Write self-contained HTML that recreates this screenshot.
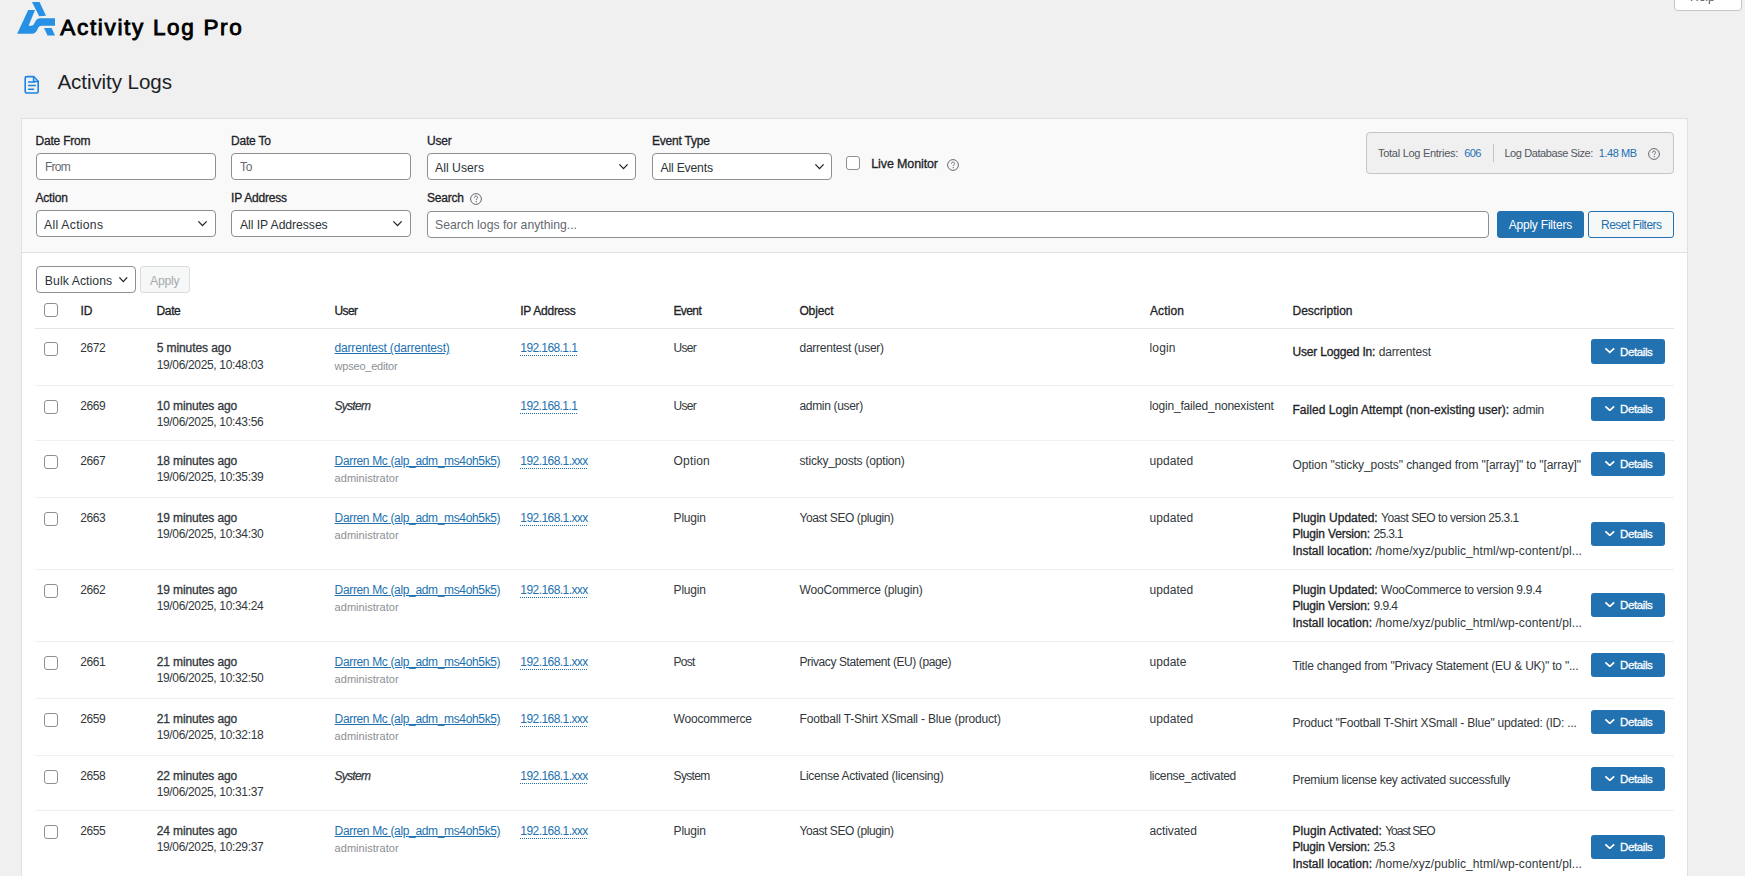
<!DOCTYPE html>
<html><head><meta charset="utf-8"><title>Activity Logs</title>
<style>
html,body{margin:0;padding:0;}
body{width:1745px;height:876px;overflow:hidden;position:relative;background:#f0f0f1;font-family:"Liberation Sans", sans-serif;}
.t{position:absolute;white-space:nowrap;}
b{font-weight:normal;color:#1d2327;-webkit-text-stroke:0.3px #1d2327;}
</style></head><body>
<svg style="position:absolute;left:16px;top:1px" width="40" height="36" viewBox="16 1 40 36">
<path d="M32 2 L39.5 2 L46 15.8 L39.2 16.2 Z" fill="#2590e6"/>
<path d="M28.2 10 L35 10 L28.6 25.8 L31 25.8 C33 25.8 33.8 24.5 34.8 22.5 C36 19.6 37.5 18.2 40.5 18.2 L55 18.2 L55 25.8 L42 25.8 C39.5 25.8 38.5 27 37.6 29 C36.3 32 35 33.7 31.6 33.7 L17.2 33.7 Z" fill="#2590e6"/>
<path d="M44 27.9 L51.6 27.9 L55 35.4 L47.5 35.4 Z" fill="#2590e6"/>
</svg>
<div class="t" style="left:60.3px;top:16.55px;font-size:22.5px;line-height:22.5px;font-weight:normal;color:#000;letter-spacing:1.678px;-webkit-text-stroke:0.9px #000;">Activity Log Pro</div>
<div style="position:absolute;left:1674px;top:-5px;width:68px;height:16px;box-sizing:border-box;background:#fff;border:1px solid #c3c4c7;border-radius:0 0 4px 4px;"></div>
<div class="t" style="left:1690px;top:-8.66px;font-size:12px;line-height:12px;font-weight:normal;color:#50575e;letter-spacing:0.000px;">Help</div>
<svg style="position:absolute;left:0px;top:0px" width="60" height="100" viewBox="0 0 60 100"><path d="M26.6 76.6 H33.6 L38.2 81.2 V91.6 Q38.2 93 36.8 93 H26.6 Q25.2 93 25.2 91.6 V78 Q25.2 76.6 26.6 76.6 Z" fill="none" stroke="#1a84e4" stroke-width="1.6" stroke-linejoin="round"/><path d="M33.6 76.6 V81.4 H38.2" fill="none" stroke="#1a84e4" stroke-width="1.5"/><path d="M34.3 78 L36.9 80.6 L34.3 80.6 Z" fill="#8cc2f2"/><path d="M28.6 82 H34.6 M28.6 85.6 H35.3 M28.6 89.2 H33.6" stroke="#1a84e4" stroke-width="1.5" stroke-linecap="round"/></svg>
<div class="t" style="left:57.4px;top:72.26px;font-size:20.6px;line-height:20.6px;font-weight:normal;color:#1d2327;letter-spacing:-0.084px;">Activity Logs</div>
<div style="position:absolute;left:21px;top:118px;width:1667px;height:782px;box-sizing:border-box;background:#fff;border:1px solid #e0e0e0;"></div>
<div style="position:absolute;left:21px;top:118px;width:1667px;height:135px;box-sizing:border-box;background:#f9f9f9;border:1px solid #e0e0e0;"></div>
<div class="t" style="left:35.5px;top:134.84px;font-size:12px;line-height:12px;font-weight:normal;color:#1d2327;letter-spacing:-0.200px;-webkit-text-stroke:0.3px #1d2327;">Date From</div>
<div class="t" style="left:231px;top:134.84px;font-size:12px;line-height:12px;font-weight:normal;color:#1d2327;letter-spacing:-0.200px;-webkit-text-stroke:0.3px #1d2327;">Date To</div>
<div class="t" style="left:427px;top:134.84px;font-size:12px;line-height:12px;font-weight:normal;color:#1d2327;letter-spacing:-0.200px;-webkit-text-stroke:0.3px #1d2327;">User</div>
<div class="t" style="left:652px;top:134.84px;font-size:12px;line-height:12px;font-weight:normal;color:#1d2327;letter-spacing:-0.200px;-webkit-text-stroke:0.3px #1d2327;">Event Type</div>
<div class="t" style="left:35.5px;top:192.14px;font-size:12px;line-height:12px;font-weight:normal;color:#1d2327;letter-spacing:-0.200px;-webkit-text-stroke:0.3px #1d2327;">Action</div>
<div class="t" style="left:231px;top:192.14px;font-size:12px;line-height:12px;font-weight:normal;color:#1d2327;letter-spacing:-0.200px;-webkit-text-stroke:0.3px #1d2327;">IP Address</div>
<div class="t" style="left:427px;top:192.14px;font-size:12px;line-height:12px;font-weight:normal;color:#1d2327;letter-spacing:-0.200px;-webkit-text-stroke:0.3px #1d2327;">Search</div>
<svg style="position:absolute;left:470px;top:192.5px" width="12" height="12" viewBox="0 0 12 12"><circle cx="6" cy="6" r="5.4" fill="none" stroke="#646970" stroke-width="1"/><path d="M4.4 4.7 C4.4 3.6 5.1 3.1 6 3.1 C6.9 3.1 7.6 3.7 7.6 4.5 C7.6 5.5 6.3 5.6 6.3 6.9" fill="none" stroke="#646970" stroke-width="1"/><circle cx="6.3" cy="8.7" r="0.65" fill="#646970"/></svg>
<div style="position:absolute;left:36px;top:153px;width:180px;height:27px;box-sizing:border-box;background:#fff;border:1px solid #8c8f94;border-radius:4px;"></div>
<div class="t" style="left:45px;top:161.04px;font-size:12px;line-height:12px;font-weight:normal;color:#646970;letter-spacing:-0.767px;">From</div>
<div style="position:absolute;left:231px;top:153px;width:180px;height:27px;box-sizing:border-box;background:#fff;border:1px solid #8c8f94;border-radius:4px;"></div>
<div class="t" style="left:240px;top:161.04px;font-size:12px;line-height:12px;font-weight:normal;color:#646970;letter-spacing:-0.300px;">To</div>
<div style="position:absolute;left:427px;top:153px;width:209px;height:27px;box-sizing:border-box;background:#fff;border:1px solid #8c8f94;border-radius:4px;"></div>
<div class="t" style="left:435px;top:161.67px;font-size:12.2px;line-height:12.2px;font-weight:normal;color:#2c3338;letter-spacing:0.029px;">All Users</div>
<svg style="position:absolute;left:617.5px;top:163.2px" width="11" height="7" viewBox="-1 -1 11 7"><path d="M0.4 0.4 L4.5 4.6 L8.6 0.4" fill="none" stroke="#1d2327" stroke-width="1.3" stroke-linecap="butt"/></svg>
<div style="position:absolute;left:652px;top:153px;width:180px;height:27px;box-sizing:border-box;background:#fff;border:1px solid #8c8f94;border-radius:4px;"></div>
<div class="t" style="left:660.5px;top:161.67px;font-size:12.2px;line-height:12.2px;font-weight:normal;color:#2c3338;letter-spacing:-0.189px;">All Events</div>
<svg style="position:absolute;left:813.7px;top:163.2px" width="11" height="7" viewBox="-1 -1 11 7"><path d="M0.4 0.4 L4.5 4.6 L8.6 0.4" fill="none" stroke="#1d2327" stroke-width="1.3" stroke-linecap="butt"/></svg>
<div style="position:absolute;left:846px;top:156px;width:14px;height:14px;box-sizing:border-box;background:#fff;border:1px solid #8c8f94;border-radius:3px;"></div>
<div class="t" style="left:871.3px;top:157.92px;font-size:12.5px;line-height:12.5px;font-weight:normal;color:#1d2327;letter-spacing:-0.127px;-webkit-text-stroke:0.3px #1d2327;">Live Monitor</div>
<svg style="position:absolute;left:947px;top:159px" width="12" height="12" viewBox="0 0 12 12"><circle cx="6" cy="6" r="5.4" fill="none" stroke="#646970" stroke-width="1"/><path d="M4.4 4.7 C4.4 3.6 5.1 3.1 6 3.1 C6.9 3.1 7.6 3.7 7.6 4.5 C7.6 5.5 6.3 5.6 6.3 6.9" fill="none" stroke="#646970" stroke-width="1"/><circle cx="6.3" cy="8.7" r="0.65" fill="#646970"/></svg>
<div style="position:absolute;left:36px;top:210px;width:180px;height:27px;box-sizing:border-box;background:#fff;border:1px solid #8c8f94;border-radius:4px;"></div>
<div class="t" style="left:44px;top:218.67px;font-size:12.2px;line-height:12.2px;font-weight:normal;color:#2c3338;letter-spacing:0.277px;">All Actions</div>
<svg style="position:absolute;left:197px;top:220.2px" width="11" height="7" viewBox="-1 -1 11 7"><path d="M0.4 0.4 L4.5 4.6 L8.6 0.4" fill="none" stroke="#1d2327" stroke-width="1.3" stroke-linecap="butt"/></svg>
<div style="position:absolute;left:231px;top:210px;width:180px;height:27px;box-sizing:border-box;background:#fff;border:1px solid #8c8f94;border-radius:4px;"></div>
<div class="t" style="left:240px;top:218.67px;font-size:12.2px;line-height:12.2px;font-weight:normal;color:#2c3338;letter-spacing:-0.055px;">All IP Addresses</div>
<svg style="position:absolute;left:392px;top:220.2px" width="11" height="7" viewBox="-1 -1 11 7"><path d="M0.4 0.4 L4.5 4.6 L8.6 0.4" fill="none" stroke="#1d2327" stroke-width="1.3" stroke-linecap="butt"/></svg>
<div style="position:absolute;left:427px;top:211px;width:1062px;height:27px;box-sizing:border-box;background:#fff;border:1px solid #8c8f94;border-radius:4px;"></div>
<div class="t" style="left:435px;top:219.17px;font-size:12.2px;line-height:12.2px;font-weight:normal;color:#646970;letter-spacing:0.016px;">Search logs for anything...</div>
<div style="position:absolute;left:1497px;top:211px;width:87px;height:27px;box-sizing:border-box;background:#2271b1;border:1px solid #2271b1;border-radius:3px;"></div>
<div class="t" style="left:1508.7px;top:219.04px;font-size:12px;line-height:12px;font-weight:normal;color:#fff;letter-spacing:-0.211px;">Apply Filters</div>
<div style="position:absolute;left:1588px;top:211px;width:86px;height:27px;box-sizing:border-box;background:#f6f7f7;border:1px solid #2271b1;border-radius:3px;"></div>
<div class="t" style="left:1601px;top:219.04px;font-size:12px;line-height:12px;font-weight:normal;color:#2271b1;letter-spacing:-0.530px;">Reset Filters</div>
<div style="position:absolute;left:1366px;top:132px;width:308px;height:42px;box-sizing:border-box;background:#f0f0f1;border:1px solid #c3c4c7;border-radius:4px;"></div>
<div class="t" style="left:1378px;top:147.89px;font-size:11px;line-height:11px;font-weight:normal;color:#50575e;letter-spacing:-0.276px;">Total Log Entries:</div>
<div class="t" style="left:1464.3px;top:147.89px;font-size:11px;line-height:11px;font-weight:normal;color:#2271b1;letter-spacing:-0.630px;">606</div>
<div style="position:absolute;left:1493px;top:144px;width:1px;height:18px;box-sizing:border-box;background:#c3c4c7;"></div>
<div class="t" style="left:1504.4px;top:147.89px;font-size:11px;line-height:11px;font-weight:normal;color:#50575e;letter-spacing:-0.413px;">Log Database Size:</div>
<div class="t" style="left:1598.7px;top:147.89px;font-size:11px;line-height:11px;font-weight:normal;color:#2271b1;letter-spacing:-0.411px;">1.48 MB</div>
<svg style="position:absolute;left:1648px;top:148px" width="12" height="12" viewBox="0 0 12 12"><circle cx="6" cy="6" r="5.4" fill="none" stroke="#646970" stroke-width="1"/><path d="M4.4 4.7 C4.4 3.6 5.1 3.1 6 3.1 C6.9 3.1 7.6 3.7 7.6 4.5 C7.6 5.5 6.3 5.6 6.3 6.9" fill="none" stroke="#646970" stroke-width="1"/><circle cx="6.3" cy="8.7" r="0.65" fill="#646970"/></svg>
<div style="position:absolute;left:36px;top:266px;width:100px;height:27px;box-sizing:border-box;background:#fff;border:1px solid #8c8f94;border-radius:4px;"></div>
<div class="t" style="left:44.8px;top:274.87px;font-size:12.2px;line-height:12.2px;font-weight:normal;color:#2c3338;letter-spacing:0.092px;">Bulk Actions</div>
<svg style="position:absolute;left:117.7px;top:276px" width="10.6" height="7" viewBox="-1 -1 10.6 7"><path d="M0.4 0.4 L4.3 4.6 L8.2 0.4" fill="none" stroke="#1d2327" stroke-width="1.3" stroke-linecap="butt"/></svg>
<div style="position:absolute;left:140px;top:266px;width:50px;height:27px;box-sizing:border-box;background:#f6f7f7;border:1px solid #dcdcde;border-radius:3px;"></div>
<div class="t" style="left:150px;top:274.87px;font-size:12.2px;line-height:12.2px;font-weight:normal;color:#a7aaad;letter-spacing:-0.200px;">Apply</div>
<div style="position:absolute;left:44px;top:303.2px;width:14px;height:14.0px;box-sizing:border-box;background:#fff;border:1px solid #8c8f94;border-radius:3px;"></div>
<div class="t" style="left:80.6px;top:304.94px;font-size:12px;line-height:12px;font-weight:normal;color:#1d2327;letter-spacing:-0.200px;-webkit-text-stroke:0.3px #1d2327;">ID</div>
<div class="t" style="left:156.5px;top:304.94px;font-size:12px;line-height:12px;font-weight:normal;color:#1d2327;letter-spacing:-0.353px;-webkit-text-stroke:0.3px #1d2327;">Date</div>
<div class="t" style="left:334.6px;top:304.94px;font-size:12px;line-height:12px;font-weight:normal;color:#1d2327;letter-spacing:-0.681px;-webkit-text-stroke:0.3px #1d2327;">User</div>
<div class="t" style="left:520.3px;top:304.94px;font-size:12px;line-height:12px;font-weight:normal;color:#1d2327;letter-spacing:-0.259px;-webkit-text-stroke:0.3px #1d2327;">IP Address</div>
<div class="t" style="left:673.4px;top:304.94px;font-size:12px;line-height:12px;font-weight:normal;color:#1d2327;letter-spacing:-0.572px;-webkit-text-stroke:0.3px #1d2327;">Event</div>
<div class="t" style="left:799.4px;top:304.94px;font-size:12px;line-height:12px;font-weight:normal;color:#1d2327;letter-spacing:-0.117px;-webkit-text-stroke:0.3px #1d2327;">Object</div>
<div class="t" style="left:1150px;top:304.94px;font-size:12px;line-height:12px;font-weight:normal;color:#1d2327;letter-spacing:0.108px;-webkit-text-stroke:0.3px #1d2327;">Action</div>
<div class="t" style="left:1292.5px;top:304.94px;font-size:12px;line-height:12px;font-weight:normal;color:#1d2327;letter-spacing:-0.003px;-webkit-text-stroke:0.3px #1d2327;">Description</div>
<div style="position:absolute;left:35px;top:328px;width:1639px;height:1px;box-sizing:border-box;background:#e2e4e7;"></div>
<div style="position:absolute;left:44px;top:342px;width:14px;height:14px;box-sizing:border-box;background:#fff;border:1px solid #8c8f94;border-radius:3px;"></div>
<div class="t" style="left:80.2px;top:342.34px;font-size:12px;line-height:12px;font-weight:normal;color:#32373c;letter-spacing:-0.400px;">2672</div>
<div class="t" style="left:156.7px;top:342.34px;font-size:12px;line-height:12px;font-weight:normal;color:#32373c;letter-spacing:-0.083px;-webkit-text-stroke:0.3px #32373c;">5 minutes ago</div>
<div class="t" style="left:156.7px;top:358.84px;font-size:12px;line-height:12px;font-weight:normal;color:#32373c;letter-spacing:-0.339px;">19/06/2025, 10:48:03</div>
<div class="t" style="left:334.6px;top:342.34px;font-size:12px;line-height:12px;font-weight:normal;color:#2271b1;letter-spacing:-0.190px;text-decoration:underline;">darrentest (darrentest)</div>
<div class="t" style="left:334.6px;top:360.99px;font-size:11px;line-height:11px;font-weight:normal;color:#8c8f94;letter-spacing:-0.222px;">wpseo_editor</div>
<div class="t" style="left:520.3px;top:342.34px;font-size:12px;line-height:12px;font-weight:normal;color:#2271b1;letter-spacing:-0.581px;text-decoration:underline dotted;text-underline-offset:3px;">192.168.1.1</div>
<div class="t" style="left:673.6px;top:342.34px;font-size:12px;line-height:12px;font-weight:normal;color:#32373c;letter-spacing:-0.748px;">User</div>
<div class="t" style="left:799.5px;top:342.34px;font-size:12px;line-height:12px;font-weight:normal;color:#32373c;letter-spacing:-0.256px;">darrentest (user)</div>
<div class="t" style="left:1149.5px;top:342.34px;font-size:12px;line-height:12px;font-weight:normal;color:#32373c;letter-spacing:0.160px;">login</div>
<div class="t" style="left:1292.5px;top:346.34px;font-size:12px;line-height:12px;font-weight:normal;color:#1d2327;letter-spacing:-0.178px;-webkit-text-stroke:0.3px #1d2327;">User Logged In:</div>
<div class="t" style="left:1378.8000000000002px;top:346.34px;font-size:12px;line-height:12px;font-weight:normal;color:#32373c;letter-spacing:-0.192px;">darrentest</div>
<div style="position:absolute;left:1591px;top:339px;width:74px;height:25px;box-sizing:border-box;background:#2271b1;border-radius:3px;"></div>
<svg style="position:absolute;left:1604.1px;top:347.2px" width="11.6" height="6.8" viewBox="-1 -1 11.6 6.8"><path d="M0.4 0.4 L4.8 4.3999999999999995 L9.2 0.4" fill="none" stroke="#fff" stroke-width="1.75" stroke-linecap="butt"/></svg>
<div class="t" style="left:1620px;top:346.87px;font-size:11.5px;line-height:11.5px;font-weight:normal;color:#fff;letter-spacing:-0.393px;-webkit-text-stroke:0.3px #fff;">Details</div>
<div style="position:absolute;left:35px;top:385px;width:1639px;height:1px;box-sizing:border-box;background:#f0f0f1;"></div>
<div style="position:absolute;left:44px;top:400px;width:14px;height:14px;box-sizing:border-box;background:#fff;border:1px solid #8c8f94;border-radius:3px;"></div>
<div class="t" style="left:80.2px;top:399.84px;font-size:12px;line-height:12px;font-weight:normal;color:#32373c;letter-spacing:-0.400px;">2669</div>
<div class="t" style="left:156.7px;top:399.84px;font-size:12px;line-height:12px;font-weight:normal;color:#32373c;letter-spacing:-0.120px;-webkit-text-stroke:0.3px #32373c;">10 minutes ago</div>
<div class="t" style="left:156.7px;top:416.34px;font-size:12px;line-height:12px;font-weight:normal;color:#32373c;letter-spacing:-0.339px;">19/06/2025, 10:43:56</div>
<div class="t" style="left:334.6px;top:399.84px;font-size:12px;line-height:12px;font-weight:normal;color:#32373c;letter-spacing:-0.743px;font-style:italic;-webkit-text-stroke:0.25px #32373c;">System</div>
<div class="t" style="left:520.3px;top:399.84px;font-size:12px;line-height:12px;font-weight:normal;color:#2271b1;letter-spacing:-0.581px;text-decoration:underline dotted;text-underline-offset:3px;">192.168.1.1</div>
<div class="t" style="left:673.6px;top:399.84px;font-size:12px;line-height:12px;font-weight:normal;color:#32373c;letter-spacing:-0.748px;">User</div>
<div class="t" style="left:799.5px;top:399.84px;font-size:12px;line-height:12px;font-weight:normal;color:#32373c;letter-spacing:-0.333px;">admin (user)</div>
<div class="t" style="left:1149.5px;top:399.84px;font-size:12px;line-height:12px;font-weight:normal;color:#32373c;letter-spacing:-0.190px;">login_failed_nonexistent</div>
<div class="t" style="left:1292.5px;top:404.34px;font-size:12px;line-height:12px;font-weight:normal;color:#1d2327;letter-spacing:0.029px;-webkit-text-stroke:0.3px #1d2327;">Failed Login Attempt (non-existing user):</div>
<div class="t" style="left:1512.5px;top:404.34px;font-size:12px;line-height:12px;font-weight:normal;color:#32373c;letter-spacing:-0.222px;">admin</div>
<div style="position:absolute;left:1591px;top:397px;width:74px;height:24px;box-sizing:border-box;background:#2271b1;border-radius:3px;"></div>
<svg style="position:absolute;left:1604.1px;top:404.7px" width="11.6" height="6.8" viewBox="-1 -1 11.6 6.8"><path d="M0.4 0.4 L4.8 4.3999999999999995 L9.2 0.4" fill="none" stroke="#fff" stroke-width="1.75" stroke-linecap="butt"/></svg>
<div class="t" style="left:1620px;top:404.37px;font-size:11.5px;line-height:11.5px;font-weight:normal;color:#fff;letter-spacing:-0.393px;-webkit-text-stroke:0.3px #fff;">Details</div>
<div style="position:absolute;left:35px;top:440px;width:1639px;height:1px;box-sizing:border-box;background:#f0f0f1;"></div>
<div style="position:absolute;left:44px;top:455px;width:14px;height:14px;box-sizing:border-box;background:#fff;border:1px solid #8c8f94;border-radius:3px;"></div>
<div class="t" style="left:80.2px;top:454.84px;font-size:12px;line-height:12px;font-weight:normal;color:#32373c;letter-spacing:-0.400px;">2667</div>
<div class="t" style="left:156.7px;top:454.84px;font-size:12px;line-height:12px;font-weight:normal;color:#32373c;letter-spacing:-0.120px;-webkit-text-stroke:0.3px #32373c;">18 minutes ago</div>
<div class="t" style="left:156.7px;top:471.34px;font-size:12px;line-height:12px;font-weight:normal;color:#32373c;letter-spacing:-0.339px;">19/06/2025, 10:35:39</div>
<div class="t" style="left:334.6px;top:454.84px;font-size:12px;line-height:12px;font-weight:normal;color:#2271b1;letter-spacing:-0.348px;text-decoration:underline;">Darren Mc (alp_adm_ms4oh5k5)</div>
<div class="t" style="left:334.6px;top:473.49px;font-size:11px;line-height:11px;font-weight:normal;color:#8c8f94;letter-spacing:0.035px;">administrator</div>
<div class="t" style="left:520.3px;top:454.84px;font-size:12px;line-height:12px;font-weight:normal;color:#2271b1;letter-spacing:-0.560px;text-decoration:underline dotted;text-underline-offset:3px;">192.168.1.xxx</div>
<div class="t" style="left:673.6px;top:454.84px;font-size:12px;line-height:12px;font-weight:normal;color:#32373c;letter-spacing:0.168px;">Option</div>
<div class="t" style="left:799.5px;top:454.84px;font-size:12px;line-height:12px;font-weight:normal;color:#32373c;letter-spacing:-0.205px;">sticky_posts (option)</div>
<div class="t" style="left:1149.5px;top:454.84px;font-size:12px;line-height:12px;font-weight:normal;color:#32373c;letter-spacing:0.068px;">updated</div>
<div class="t" style="left:1292.5px;top:459.34px;font-size:12px;line-height:12px;font-weight:normal;color:#32373c;letter-spacing:-0.103px;">Option "sticky_posts" changed from "[array]" to "[array]"</div>
<div style="position:absolute;left:1591px;top:452px;width:74px;height:24px;box-sizing:border-box;background:#2271b1;border-radius:3px;"></div>
<svg style="position:absolute;left:1604.1px;top:459.7px" width="11.6" height="6.8" viewBox="-1 -1 11.6 6.8"><path d="M0.4 0.4 L4.8 4.3999999999999995 L9.2 0.4" fill="none" stroke="#fff" stroke-width="1.75" stroke-linecap="butt"/></svg>
<div class="t" style="left:1620px;top:459.37px;font-size:11.5px;line-height:11.5px;font-weight:normal;color:#fff;letter-spacing:-0.393px;-webkit-text-stroke:0.3px #fff;">Details</div>
<div style="position:absolute;left:35px;top:497px;width:1639px;height:1px;box-sizing:border-box;background:#f0f0f1;"></div>
<div style="position:absolute;left:44px;top:512px;width:14px;height:14px;box-sizing:border-box;background:#fff;border:1px solid #8c8f94;border-radius:3px;"></div>
<div class="t" style="left:80.2px;top:511.84px;font-size:12px;line-height:12px;font-weight:normal;color:#32373c;letter-spacing:-0.400px;">2663</div>
<div class="t" style="left:156.7px;top:511.84px;font-size:12px;line-height:12px;font-weight:normal;color:#32373c;letter-spacing:-0.120px;-webkit-text-stroke:0.3px #32373c;">19 minutes ago</div>
<div class="t" style="left:156.7px;top:528.34px;font-size:12px;line-height:12px;font-weight:normal;color:#32373c;letter-spacing:-0.339px;">19/06/2025, 10:34:30</div>
<div class="t" style="left:334.6px;top:511.84px;font-size:12px;line-height:12px;font-weight:normal;color:#2271b1;letter-spacing:-0.348px;text-decoration:underline;">Darren Mc (alp_adm_ms4oh5k5)</div>
<div class="t" style="left:334.6px;top:530.49px;font-size:11px;line-height:11px;font-weight:normal;color:#8c8f94;letter-spacing:0.035px;">administrator</div>
<div class="t" style="left:520.3px;top:511.84px;font-size:12px;line-height:12px;font-weight:normal;color:#2271b1;letter-spacing:-0.560px;text-decoration:underline dotted;text-underline-offset:3px;">192.168.1.xxx</div>
<div class="t" style="left:673.6px;top:511.84px;font-size:12px;line-height:12px;font-weight:normal;color:#32373c;letter-spacing:-0.212px;">Plugin</div>
<div class="t" style="left:799.5px;top:511.84px;font-size:12px;line-height:12px;font-weight:normal;color:#32373c;letter-spacing:-0.425px;">Yoast SEO (plugin)</div>
<div class="t" style="left:1149.5px;top:511.84px;font-size:12px;line-height:12px;font-weight:normal;color:#32373c;letter-spacing:0.068px;">updated</div>
<div class="t" style="left:1292.5px;top:511.84px;font-size:12px;line-height:12px;font-weight:normal;color:#1d2327;letter-spacing:-0.015px;-webkit-text-stroke:0.3px #1d2327;">Plugin Updated:</div>
<div class="t" style="left:1381.1000000000001px;top:511.84px;font-size:12px;line-height:12px;font-weight:normal;color:#32373c;letter-spacing:-0.466px;">Yoast SEO to version 25.3.1</div>
<div class="t" style="left:1292.5px;top:528.34px;font-size:12px;line-height:12px;font-weight:normal;color:#1d2327;letter-spacing:-0.169px;-webkit-text-stroke:0.3px #1d2327;">Plugin Version:</div>
<div class="t" style="left:1373.6000000000001px;top:528.34px;font-size:12px;line-height:12px;font-weight:normal;color:#32373c;letter-spacing:-0.695px;">25.3.1</div>
<div class="t" style="left:1292.5px;top:544.84px;font-size:12px;line-height:12px;font-weight:normal;color:#1d2327;letter-spacing:0.007px;-webkit-text-stroke:0.3px #1d2327;">Install location:</div>
<div class="t" style="left:1375.4px;top:544.84px;font-size:12px;line-height:12px;font-weight:normal;color:#32373c;letter-spacing:0.083px;">/home/xyz/public_html/wp-content/pl...</div>
<div style="position:absolute;left:1591px;top:522px;width:74px;height:24px;box-sizing:border-box;background:#2271b1;border-radius:3px;"></div>
<svg style="position:absolute;left:1604.1px;top:529.7px" width="11.6" height="6.8" viewBox="-1 -1 11.6 6.8"><path d="M0.4 0.4 L4.8 4.3999999999999995 L9.2 0.4" fill="none" stroke="#fff" stroke-width="1.75" stroke-linecap="butt"/></svg>
<div class="t" style="left:1620px;top:529.37px;font-size:11.5px;line-height:11.5px;font-weight:normal;color:#fff;letter-spacing:-0.393px;-webkit-text-stroke:0.3px #fff;">Details</div>
<div style="position:absolute;left:35px;top:569px;width:1639px;height:1px;box-sizing:border-box;background:#f0f0f1;"></div>
<div style="position:absolute;left:44px;top:584px;width:14px;height:14px;box-sizing:border-box;background:#fff;border:1px solid #8c8f94;border-radius:3px;"></div>
<div class="t" style="left:80.2px;top:583.84px;font-size:12px;line-height:12px;font-weight:normal;color:#32373c;letter-spacing:-0.400px;">2662</div>
<div class="t" style="left:156.7px;top:583.84px;font-size:12px;line-height:12px;font-weight:normal;color:#32373c;letter-spacing:-0.120px;-webkit-text-stroke:0.3px #32373c;">19 minutes ago</div>
<div class="t" style="left:156.7px;top:600.34px;font-size:12px;line-height:12px;font-weight:normal;color:#32373c;letter-spacing:-0.339px;">19/06/2025, 10:34:24</div>
<div class="t" style="left:334.6px;top:583.84px;font-size:12px;line-height:12px;font-weight:normal;color:#2271b1;letter-spacing:-0.348px;text-decoration:underline;">Darren Mc (alp_adm_ms4oh5k5)</div>
<div class="t" style="left:334.6px;top:602.49px;font-size:11px;line-height:11px;font-weight:normal;color:#8c8f94;letter-spacing:0.035px;">administrator</div>
<div class="t" style="left:520.3px;top:583.84px;font-size:12px;line-height:12px;font-weight:normal;color:#2271b1;letter-spacing:-0.560px;text-decoration:underline dotted;text-underline-offset:3px;">192.168.1.xxx</div>
<div class="t" style="left:673.6px;top:583.84px;font-size:12px;line-height:12px;font-weight:normal;color:#32373c;letter-spacing:-0.212px;">Plugin</div>
<div class="t" style="left:799.5px;top:583.84px;font-size:12px;line-height:12px;font-weight:normal;color:#32373c;letter-spacing:-0.174px;">WooCommerce (plugin)</div>
<div class="t" style="left:1149.5px;top:583.84px;font-size:12px;line-height:12px;font-weight:normal;color:#32373c;letter-spacing:0.068px;">updated</div>
<div class="t" style="left:1292.5px;top:583.84px;font-size:12px;line-height:12px;font-weight:normal;color:#1d2327;letter-spacing:-0.015px;-webkit-text-stroke:0.3px #1d2327;">Plugin Updated:</div>
<div class="t" style="left:1381.1000000000001px;top:583.84px;font-size:12px;line-height:12px;font-weight:normal;color:#32373c;letter-spacing:-0.286px;">WooCommerce to version 9.9.4</div>
<div class="t" style="left:1292.5px;top:600.34px;font-size:12px;line-height:12px;font-weight:normal;color:#1d2327;letter-spacing:-0.169px;-webkit-text-stroke:0.3px #1d2327;">Plugin Version:</div>
<div class="t" style="left:1373.6000000000001px;top:600.34px;font-size:12px;line-height:12px;font-weight:normal;color:#32373c;letter-spacing:-0.576px;">9.9.4</div>
<div class="t" style="left:1292.5px;top:616.84px;font-size:12px;line-height:12px;font-weight:normal;color:#1d2327;letter-spacing:0.007px;-webkit-text-stroke:0.3px #1d2327;">Install location:</div>
<div class="t" style="left:1375.4px;top:616.84px;font-size:12px;line-height:12px;font-weight:normal;color:#32373c;letter-spacing:0.083px;">/home/xyz/public_html/wp-content/pl...</div>
<div style="position:absolute;left:1591px;top:593px;width:74px;height:24px;box-sizing:border-box;background:#2271b1;border-radius:3px;"></div>
<svg style="position:absolute;left:1604.1px;top:600.7px" width="11.6" height="6.8" viewBox="-1 -1 11.6 6.8"><path d="M0.4 0.4 L4.8 4.3999999999999995 L9.2 0.4" fill="none" stroke="#fff" stroke-width="1.75" stroke-linecap="butt"/></svg>
<div class="t" style="left:1620px;top:600.37px;font-size:11.5px;line-height:11.5px;font-weight:normal;color:#fff;letter-spacing:-0.393px;-webkit-text-stroke:0.3px #fff;">Details</div>
<div style="position:absolute;left:35px;top:641px;width:1639px;height:1px;box-sizing:border-box;background:#f0f0f1;"></div>
<div style="position:absolute;left:44px;top:656px;width:14px;height:14px;box-sizing:border-box;background:#fff;border:1px solid #8c8f94;border-radius:3px;"></div>
<div class="t" style="left:80.2px;top:655.84px;font-size:12px;line-height:12px;font-weight:normal;color:#32373c;letter-spacing:-0.400px;">2661</div>
<div class="t" style="left:156.7px;top:655.84px;font-size:12px;line-height:12px;font-weight:normal;color:#32373c;letter-spacing:-0.120px;-webkit-text-stroke:0.3px #32373c;">21 minutes ago</div>
<div class="t" style="left:156.7px;top:672.34px;font-size:12px;line-height:12px;font-weight:normal;color:#32373c;letter-spacing:-0.339px;">19/06/2025, 10:32:50</div>
<div class="t" style="left:334.6px;top:655.84px;font-size:12px;line-height:12px;font-weight:normal;color:#2271b1;letter-spacing:-0.348px;text-decoration:underline;">Darren Mc (alp_adm_ms4oh5k5)</div>
<div class="t" style="left:334.6px;top:674.49px;font-size:11px;line-height:11px;font-weight:normal;color:#8c8f94;letter-spacing:0.035px;">administrator</div>
<div class="t" style="left:520.3px;top:655.84px;font-size:12px;line-height:12px;font-weight:normal;color:#2271b1;letter-spacing:-0.560px;text-decoration:underline dotted;text-underline-offset:3px;">192.168.1.xxx</div>
<div class="t" style="left:673.6px;top:655.84px;font-size:12px;line-height:12px;font-weight:normal;color:#32373c;letter-spacing:-0.739px;">Post</div>
<div class="t" style="left:799.5px;top:655.84px;font-size:12px;line-height:12px;font-weight:normal;color:#32373c;letter-spacing:-0.407px;">Privacy Statement (EU) (page)</div>
<div class="t" style="left:1149.5px;top:655.84px;font-size:12px;line-height:12px;font-weight:normal;color:#32373c;letter-spacing:0.039px;">update</div>
<div class="t" style="left:1292.5px;top:660.34px;font-size:12px;line-height:12px;font-weight:normal;color:#32373c;letter-spacing:-0.226px;">Title changed from "Privacy Statement (EU &amp; UK)" to "...</div>
<div style="position:absolute;left:1591px;top:653px;width:74px;height:24px;box-sizing:border-box;background:#2271b1;border-radius:3px;"></div>
<svg style="position:absolute;left:1604.1px;top:660.7px" width="11.6" height="6.8" viewBox="-1 -1 11.6 6.8"><path d="M0.4 0.4 L4.8 4.3999999999999995 L9.2 0.4" fill="none" stroke="#fff" stroke-width="1.75" stroke-linecap="butt"/></svg>
<div class="t" style="left:1620px;top:660.37px;font-size:11.5px;line-height:11.5px;font-weight:normal;color:#fff;letter-spacing:-0.393px;-webkit-text-stroke:0.3px #fff;">Details</div>
<div style="position:absolute;left:35px;top:698px;width:1639px;height:1px;box-sizing:border-box;background:#f0f0f1;"></div>
<div style="position:absolute;left:44px;top:713px;width:14px;height:14px;box-sizing:border-box;background:#fff;border:1px solid #8c8f94;border-radius:3px;"></div>
<div class="t" style="left:80.2px;top:712.84px;font-size:12px;line-height:12px;font-weight:normal;color:#32373c;letter-spacing:-0.400px;">2659</div>
<div class="t" style="left:156.7px;top:712.84px;font-size:12px;line-height:12px;font-weight:normal;color:#32373c;letter-spacing:-0.120px;-webkit-text-stroke:0.3px #32373c;">21 minutes ago</div>
<div class="t" style="left:156.7px;top:729.34px;font-size:12px;line-height:12px;font-weight:normal;color:#32373c;letter-spacing:-0.339px;">19/06/2025, 10:32:18</div>
<div class="t" style="left:334.6px;top:712.84px;font-size:12px;line-height:12px;font-weight:normal;color:#2271b1;letter-spacing:-0.348px;text-decoration:underline;">Darren Mc (alp_adm_ms4oh5k5)</div>
<div class="t" style="left:334.6px;top:731.49px;font-size:11px;line-height:11px;font-weight:normal;color:#8c8f94;letter-spacing:0.035px;">administrator</div>
<div class="t" style="left:520.3px;top:712.84px;font-size:12px;line-height:12px;font-weight:normal;color:#2271b1;letter-spacing:-0.560px;text-decoration:underline dotted;text-underline-offset:3px;">192.168.1.xxx</div>
<div class="t" style="left:673.6px;top:712.84px;font-size:12px;line-height:12px;font-weight:normal;color:#32373c;letter-spacing:-0.217px;">Woocommerce</div>
<div class="t" style="left:799.5px;top:712.84px;font-size:12px;line-height:12px;font-weight:normal;color:#32373c;letter-spacing:-0.180px;">Football T-Shirt XSmall - Blue (product)</div>
<div class="t" style="left:1149.5px;top:712.84px;font-size:12px;line-height:12px;font-weight:normal;color:#32373c;letter-spacing:0.068px;">updated</div>
<div class="t" style="left:1292.5px;top:717.34px;font-size:12px;line-height:12px;font-weight:normal;color:#32373c;letter-spacing:-0.211px;">Product "Football T-Shirt XSmall - Blue" updated: (ID: ...</div>
<div style="position:absolute;left:1591px;top:710px;width:74px;height:24px;box-sizing:border-box;background:#2271b1;border-radius:3px;"></div>
<svg style="position:absolute;left:1604.1px;top:717.7px" width="11.6" height="6.8" viewBox="-1 -1 11.6 6.8"><path d="M0.4 0.4 L4.8 4.3999999999999995 L9.2 0.4" fill="none" stroke="#fff" stroke-width="1.75" stroke-linecap="butt"/></svg>
<div class="t" style="left:1620px;top:717.37px;font-size:11.5px;line-height:11.5px;font-weight:normal;color:#fff;letter-spacing:-0.393px;-webkit-text-stroke:0.3px #fff;">Details</div>
<div style="position:absolute;left:35px;top:755px;width:1639px;height:1px;box-sizing:border-box;background:#f0f0f1;"></div>
<div style="position:absolute;left:44px;top:770px;width:14px;height:14px;box-sizing:border-box;background:#fff;border:1px solid #8c8f94;border-radius:3px;"></div>
<div class="t" style="left:80.2px;top:769.84px;font-size:12px;line-height:12px;font-weight:normal;color:#32373c;letter-spacing:-0.400px;">2658</div>
<div class="t" style="left:156.7px;top:769.84px;font-size:12px;line-height:12px;font-weight:normal;color:#32373c;letter-spacing:-0.120px;-webkit-text-stroke:0.3px #32373c;">22 minutes ago</div>
<div class="t" style="left:156.7px;top:786.34px;font-size:12px;line-height:12px;font-weight:normal;color:#32373c;letter-spacing:-0.339px;">19/06/2025, 10:31:37</div>
<div class="t" style="left:334.6px;top:769.84px;font-size:12px;line-height:12px;font-weight:normal;color:#32373c;letter-spacing:-0.743px;font-style:italic;-webkit-text-stroke:0.25px #32373c;">System</div>
<div class="t" style="left:520.3px;top:769.84px;font-size:12px;line-height:12px;font-weight:normal;color:#2271b1;letter-spacing:-0.560px;text-decoration:underline dotted;text-underline-offset:3px;">192.168.1.xxx</div>
<div class="t" style="left:673.6px;top:769.84px;font-size:12px;line-height:12px;font-weight:normal;color:#32373c;letter-spacing:-0.683px;">System</div>
<div class="t" style="left:799.5px;top:769.84px;font-size:12px;line-height:12px;font-weight:normal;color:#32373c;letter-spacing:-0.258px;">License Activated (licensing)</div>
<div class="t" style="left:1149.5px;top:769.84px;font-size:12px;line-height:12px;font-weight:normal;color:#32373c;letter-spacing:-0.335px;">license_activated</div>
<div class="t" style="left:1292.5px;top:774.34px;font-size:12px;line-height:12px;font-weight:normal;color:#32373c;letter-spacing:-0.300px;">Premium license key activated successfully</div>
<div style="position:absolute;left:1591px;top:767px;width:74px;height:24px;box-sizing:border-box;background:#2271b1;border-radius:3px;"></div>
<svg style="position:absolute;left:1604.1px;top:774.7px" width="11.6" height="6.8" viewBox="-1 -1 11.6 6.8"><path d="M0.4 0.4 L4.8 4.3999999999999995 L9.2 0.4" fill="none" stroke="#fff" stroke-width="1.75" stroke-linecap="butt"/></svg>
<div class="t" style="left:1620px;top:774.37px;font-size:11.5px;line-height:11.5px;font-weight:normal;color:#fff;letter-spacing:-0.393px;-webkit-text-stroke:0.3px #fff;">Details</div>
<div style="position:absolute;left:35px;top:810px;width:1639px;height:1px;box-sizing:border-box;background:#f0f0f1;"></div>
<div style="position:absolute;left:44px;top:825px;width:14px;height:14px;box-sizing:border-box;background:#fff;border:1px solid #8c8f94;border-radius:3px;"></div>
<div class="t" style="left:80.2px;top:824.84px;font-size:12px;line-height:12px;font-weight:normal;color:#32373c;letter-spacing:-0.400px;">2655</div>
<div class="t" style="left:156.7px;top:824.84px;font-size:12px;line-height:12px;font-weight:normal;color:#32373c;letter-spacing:-0.120px;-webkit-text-stroke:0.3px #32373c;">24 minutes ago</div>
<div class="t" style="left:156.7px;top:841.34px;font-size:12px;line-height:12px;font-weight:normal;color:#32373c;letter-spacing:-0.339px;">19/06/2025, 10:29:37</div>
<div class="t" style="left:334.6px;top:824.84px;font-size:12px;line-height:12px;font-weight:normal;color:#2271b1;letter-spacing:-0.348px;text-decoration:underline;">Darren Mc (alp_adm_ms4oh5k5)</div>
<div class="t" style="left:334.6px;top:843.49px;font-size:11px;line-height:11px;font-weight:normal;color:#8c8f94;letter-spacing:0.035px;">administrator</div>
<div class="t" style="left:520.3px;top:824.84px;font-size:12px;line-height:12px;font-weight:normal;color:#2271b1;letter-spacing:-0.560px;text-decoration:underline dotted;text-underline-offset:3px;">192.168.1.xxx</div>
<div class="t" style="left:673.6px;top:824.84px;font-size:12px;line-height:12px;font-weight:normal;color:#32373c;letter-spacing:-0.212px;">Plugin</div>
<div class="t" style="left:799.5px;top:824.84px;font-size:12px;line-height:12px;font-weight:normal;color:#32373c;letter-spacing:-0.425px;">Yoast SEO (plugin)</div>
<div class="t" style="left:1149.5px;top:824.84px;font-size:12px;line-height:12px;font-weight:normal;color:#32373c;letter-spacing:-0.091px;">activated</div>
<div class="t" style="left:1292.5px;top:824.84px;font-size:12px;line-height:12px;font-weight:normal;color:#1d2327;letter-spacing:0.035px;-webkit-text-stroke:0.3px #1d2327;">Plugin Activated:</div>
<div class="t" style="left:1385.2px;top:824.84px;font-size:12px;line-height:12px;font-weight:normal;color:#32373c;letter-spacing:-0.971px;">Yoast SEO</div>
<div class="t" style="left:1292.5px;top:841.34px;font-size:12px;line-height:12px;font-weight:normal;color:#1d2327;letter-spacing:-0.169px;-webkit-text-stroke:0.3px #1d2327;">Plugin Version:</div>
<div class="t" style="left:1373.6000000000001px;top:841.34px;font-size:12px;line-height:12px;font-weight:normal;color:#32373c;letter-spacing:-0.553px;">25.3</div>
<div class="t" style="left:1292.5px;top:857.84px;font-size:12px;line-height:12px;font-weight:normal;color:#1d2327;letter-spacing:0.007px;-webkit-text-stroke:0.3px #1d2327;">Install location:</div>
<div class="t" style="left:1375.4px;top:857.84px;font-size:12px;line-height:12px;font-weight:normal;color:#32373c;letter-spacing:0.083px;">/home/xyz/public_html/wp-content/pl...</div>
<div style="position:absolute;left:1591px;top:835px;width:74px;height:24px;box-sizing:border-box;background:#2271b1;border-radius:3px;"></div>
<svg style="position:absolute;left:1604.1px;top:842.7px" width="11.6" height="6.8" viewBox="-1 -1 11.6 6.8"><path d="M0.4 0.4 L4.8 4.3999999999999995 L9.2 0.4" fill="none" stroke="#fff" stroke-width="1.75" stroke-linecap="butt"/></svg>
<div class="t" style="left:1620px;top:842.37px;font-size:11.5px;line-height:11.5px;font-weight:normal;color:#fff;letter-spacing:-0.393px;-webkit-text-stroke:0.3px #fff;">Details</div>
</body></html>
